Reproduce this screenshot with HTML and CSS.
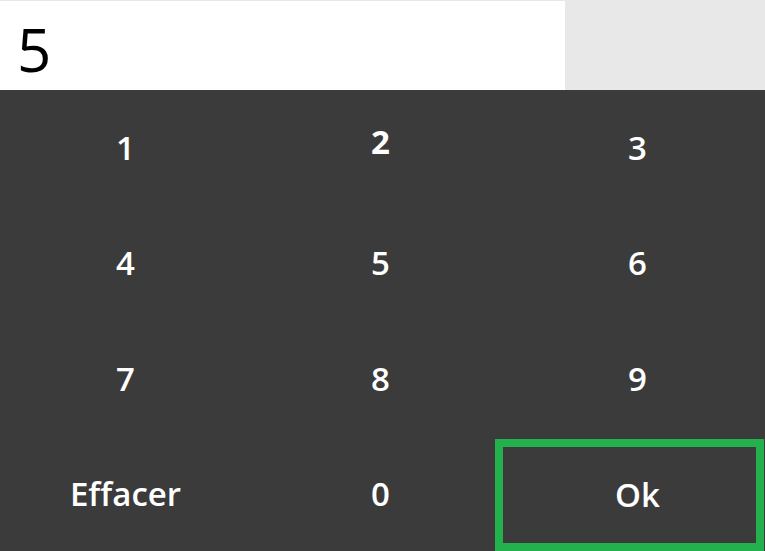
FILE: index.html
```html
<!DOCTYPE html>
<html lang="fr">
<head>
<meta charset="utf-8">
<title>Clavier</title>
<link rel="stylesheet" href="styles.css">
</head>
<body>
<div class="app">
  <div class="header">
    <div class="display">5</div>
  </div>
  <div class="keypad">
    <div class="key">1</div>
    <div class="key key-bold">2</div>
    <div class="key">3</div>
    <div class="key">4</div>
    <div class="key">5</div>
    <div class="key">6</div>
    <div class="key">7</div>
    <div class="key">8</div>
    <div class="key">9</div>
    <div class="key">Effacer</div>
    <div class="key">0</div>
    <div class="key key-ok">Ok</div>
  </div>
</div>
</body>
</html>
```
FILE: styles.css
```css
html, body {
  margin: 0;
  padding: 0;
  width: 765px;
  height: 551px;
  overflow: hidden;
}
.app {
  display: flex;
  flex-direction: column;
  height: 551px;
  font-family: "Open Sans", "Noto Sans", sans-serif;
}
.header {
  height: 90px;
  background: #e8e8e8;
  display: flex;
  align-items: flex-end;
}
.display {
  width: 565px;
  height: 89px;
  background: #ffffff;
  box-sizing: border-box;
  padding-left: 17px;
  font-size: 60px;
  font-weight: 400;
  line-height: 96px;
  color: #000;
}
.keypad {
  flex: 1;
  background: #3b3b3b;
  display: grid;
  grid-template-columns: repeat(3, 1fr);
  grid-template-rows: repeat(4, 1fr);
}
.key {
  display: flex;
  align-items: center;
  justify-content: center;
  color: #ffffff;
  font-size: 33px;
  font-weight: 600;
  padding-right: 4px;
  min-width: 0;
  min-height: 0;
}
.key:nth-child(3n) {
  padding-right: 0;
}
.key-bold {
  font-weight: 700;
  padding-bottom: 12px;
}
.key-ok {
  margin: 3px 1px 0 -15px;
  border: 8px solid #22b14c;
  padding-left: 16px;
}
```
